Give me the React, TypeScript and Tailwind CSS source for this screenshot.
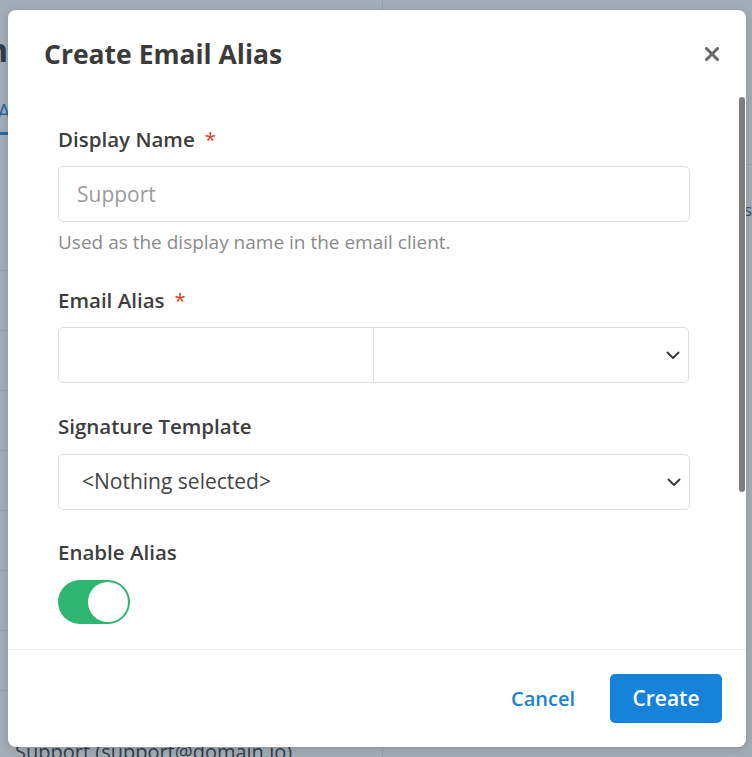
import React from 'react';

const rows = [255, 305, 375, 435, 495, 555, 615, 675];

const ChevronDown: React.FC = () => (
  <svg width="14" height="9" viewBox="0 0 14 9" fill="none" className="text-[#3c3c3c]">
    <path d="M1.5 1.5 7 7l5.5-5.5" stroke="currentColor" strokeWidth="2" strokeLinecap="round" strokeLinejoin="round" />
  </svg>
);

const Label: React.FC<{ text: string; required?: boolean }> = ({ text, required }) => (
  <div className="text-[20.5px] leading-[28px] font-semibold text-[#3d3d3d]">
    {text}
    {required && <span className="ml-[10px] font-normal text-[#e2401d]">*</span>}
  </div>
);

const App: React.FC = () => {
  return (
    <div className="relative h-[757px] w-[752px] overflow-hidden bg-white font-['Open_Sans','Noto_Sans',sans-serif]">
      {/* page behind the dialog */}
      <div className="flex h-full">
        <div className="w-[440px] border-r border-[#e3e7eb]">
          <div className="-ml-[112px] mt-[30px] w-[120px] text-right text-[32px] font-bold leading-[40px] text-[#263445]">Admin</div>
          <div className="mt-[26px] flex">
            <div className="-ml-[3px] border-b-[3px] border-[#1a82d8] pb-[6px] text-[22px] leading-[30px] text-[#1a82d8]">Aliases</div>
          </div>
          <div className="-ml-[30px] mt-[52px] text-[17px] leading-[24px] text-[#666]">Tag</div>
          {rows.map((y) => (
            <div key={y} className="h-[60px] border-b border-[#e3e7eb]" />
          ))}
        </div>
        <div className="flex-1">
          <div className="h-[165px] border-b border-[#e3e7eb]" />
          <div className="pl-[306px] text-[17px] leading-[30px] text-[#555]">
            <div>name</div>
            <div>address</div>
          </div>
          <div className="mt-[400px] pl-[306px] text-[17px] leading-[30px] text-[#555]">by</div>
        </div>
      </div>
      <div className="absolute left-[15px] top-[738px] text-[20px] leading-[28px] text-[#333]">Support (support@domain.io)</div>

      {/* overlay */}
      <div className="absolute inset-0 bg-[#34495e]/45" />

      {/* dialog */}
      <div className="absolute left-[8px] top-[10px] flex h-[737px] w-[738px] flex-col rounded-[8px] bg-white shadow-[0_2px_10px_rgba(0,0,0,0.15)]">
        <div className="flex h-[84px] shrink-0 items-start justify-between pl-[36px] pr-[27px] pt-[28px]">
          <h2 className="text-[26.5px] font-bold leading-[32px] text-[#3b3b3b]">Create Email Alias</h2>
          <button className="mt-[9px] text-[#666]">
            <svg width="14" height="14" viewBox="0 0 14 14" fill="none">
              <path d="M1.5 1.5l11 11M12.5 1.5l-11 11" stroke="currentColor" strokeWidth="3" strokeLinecap="round" />
            </svg>
          </button>
        </div>

        <div className="relative flex-1 overflow-hidden">
          <div className="pl-[50px] pr-[56px] pt-[31px]">
            <Label text="Display Name" required />
            <input
              placeholder="Support"
              className="mt-[13px] block h-[56px] w-full rounded-[5px] border border-[#d9dde2] px-[18px] text-[21px] text-[#333] outline-none placeholder:text-[#9b9b9b]"
            />
            <div className="mt-[8px] text-[19px] leading-[24px] text-[#8a8a8a]">Used as the display name in the email client.</div>

            <div className="mt-[32px]">
              <Label text="Email Alias" required />
            </div>
            <div className="mt-[13px] flex h-[56px]">
              <input className="h-full w-1/2 rounded-l-[5px] border border-[#d9dde2] px-[18px] text-[21px] outline-none" />
              <div className="-ml-px flex h-full w-1/2 items-center justify-end rounded-r-[5px] border border-[#d9dde2] pr-[8px]">
                <ChevronDown />
              </div>
            </div>

            <div className="mt-[29px]">
              <Label text="Signature Template" />
            </div>
            <div className="mt-[14px] flex h-[56px] items-center justify-between rounded-[5px] border border-[#d9dde2] pl-[23px] pr-[8px]">
              <span className="text-[21px] text-[#444]">&lt;Nothing selected&gt;</span>
              <ChevronDown />
            </div>

            <div className="mt-[28px]">
              <Label text="Enable Alias" />
            </div>
            <div className="relative mt-[14px] h-[44px] w-[72px] rounded-full bg-[#2eb670]">
              <div className="absolute right-[2px] top-[2px] h-[40px] w-[40px] rounded-full bg-white" />
            </div>

            <div className="mt-[30px]">
              <Label text="Forward Copies" />
            </div>
          </div>
          <div className="absolute right-[1px] top-[3px] h-[395px] w-[6px] rounded-full bg-[#7f7f7f]" />
        </div>

        <div className="flex h-[98px] shrink-0 items-center justify-end gap-[19px] border-t border-[#ececec] pr-[24px]">
          <button className="px-[16px] text-[20px] font-semibold text-[#1a82d8]">Cancel</button>
          <button className="h-[49px] w-[112px] rounded-[5px] bg-[#1682d9] text-[21px] font-semibold text-white">Create</button>
        </div>
      </div>
    </div>
  );
};

export default App;
